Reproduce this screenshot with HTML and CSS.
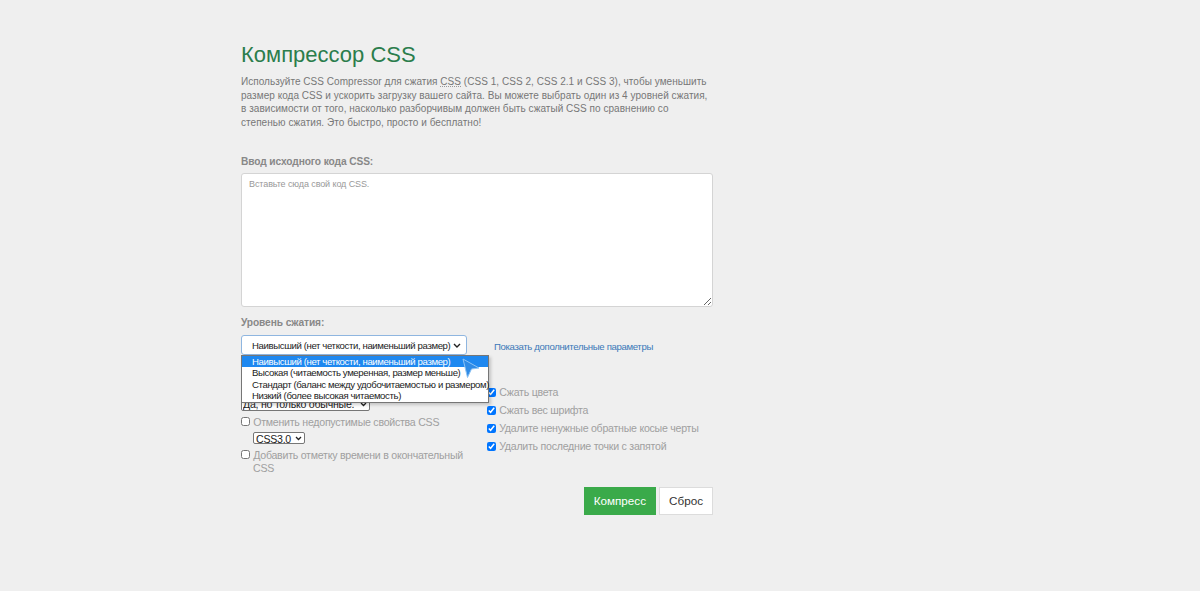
FILE: index.html
```html
<!DOCTYPE html>
<html lang="ru">
<head>
    <meta charset="UTF-8">
    <meta name="viewport" content="width=device-width, initial-scale=1.0">
    <title>Компрессор CSS</title>
    <link rel="stylesheet" href="styles.css">
</head>
<body>
    <main class="tool">
        <h1>Компрессор CSS</h1>
        <p class="intro">Используйте CSS Compressor для сжатия <abbr title="Cascading Style Sheets">CSS</abbr> (CSS 1, CSS 2, CSS 2.1 и CSS 3), чтобы уменьшить размер кода CSS и ускорить загрузку вашего сайта. Вы можете выбрать один из 4 уровней сжатия, в зависимости от того, насколько разборчивым должен быть сжатый CSS по сравнению со степенью сжатия. Это быстро, просто и бесплатно!</p>

        <label class="field-label" for="source">Ввод исходного кода CSS:</label>
        <textarea id="source" class="source" placeholder="Вставьте сюда свой код CSS."></textarea>

        <label class="field-label level-label" for="level">Уровень сжатия:</label>
        <div class="level-row">
            <div class="select-wrap">
                <select id="level" class="level-select">
                    <option>Наивысший (нет четкости, наименьший размер)</option>
                    <option>Высокая (читаемость умеренная, размер меньше)</option>
                    <option>Стандарт (баланс между удобочитаемостью и размером)</option>
                    <option>Низкий (более высокая читаемость)</option>
                </select>
                <svg class="chevron level-chevron" width="8" height="5" viewBox="0 0 8 5">
                    <path d="M1 1 L4 4 L7 1" fill="none" stroke="#222" stroke-width="1.4"/>
                </svg>
                <!-- раскрытый список -->
                <ul class="dropdown">
                    <li class="active">Наивысший (нет четкости, наименьший размер)</li>
                    <li>Высокая (читаемость умеренная, размер меньше)</li>
                    <li>Стандарт (баланс между удобочитаемостью и размером)</li>
                    <li>Низкий (более высокая читаемость)</li>
                </ul>
                <svg class="pointer" width="20" height="22" viewBox="0 0 20 22">
                    <path d="M1 1 L17 10 L9.5 11 L5.5 19.5 Z" fill="#2f8be6" stroke="#8cc3f5" stroke-width="1" stroke-linejoin="round"/>
                </svg>
            </div>
            <a href="#" class="more-link">Показать дополнительные параметры</a>
        </div>

        <div class="options">
            <div class="options-col left-col">
                <div class="opt-label">Удалить комментарии:</div>
                <span class="select-box comments-box">
                    <select class="small-select">
                        <option>Да, но только обычные.</option>
                        <option>Да, все</option>
                        <option>Нет</option>
                    </select>
                    <svg class="chevron" width="7" height="5" viewBox="0 0 7 5">
                        <path d="M1 1 L3.5 3.5 L6 1" fill="none" stroke="#222" stroke-width="1.3"/>
                    </svg>
                </span>
                <label class="check"><input type="checkbox"> Отменить недопустимые свойства CSS</label>
                <span class="select-box css-box">
                    <select class="small-select">
                        <option>CSS3.0</option>
                        <option>CSS2.1</option>
                    </select>
                    <svg class="chevron" width="7" height="5" viewBox="0 0 7 5">
                        <path d="M1 1 L3.5 3.5 L6 1" fill="none" stroke="#222" stroke-width="1.3"/>
                    </svg>
                </span>
                <label class="check check-last"><input type="checkbox"> Добавить отметку времени в окончательный CSS</label>
            </div>
            <div class="options-col right-col">
                <label class="check"><input type="checkbox" checked> Сжать цвета</label>
                <label class="check"><input type="checkbox" checked> Сжать вес шрифта</label>
                <label class="check"><input type="checkbox" checked> Удалите ненужные обратные косые черты</label>
                <label class="check"><input type="checkbox" checked> Удалить последние точки с запятой</label>
            </div>
        </div>

        <div class="actions">
            <button class="btn btn-primary">Компресс</button>
            <button class="btn btn-reset">Сброс</button>
        </div>
    </main>
</body>
</html>
```

FILE: styles.css
```css
body {
    font-family: "Liberation Sans", Arial, sans-serif;
    background-color: #efefef;
    margin: 0;
    padding: 0;
}

.tool {
    width: 472px;
    margin-left: 241px;
    padding-top: 41px;
}

h1 {
    font-size: 22px;
    font-weight: normal;
    line-height: 28px;
    color: #2b7d4c;
    margin: 0;
}

.intro {
    font-size: 10px;
    letter-spacing: 0.04px;
    line-height: 13.5px;
    color: #777;
    margin: 6px 0 0;
}

.intro abbr {
    text-decoration: underline dotted #999;
}

.field-label {
    display: block;
    font-size: 10.2px;
    letter-spacing: -0.1px;
    font-weight: bold;
    line-height: 14px;
    color: #888;
    margin-top: 26px;
}

.level-label {
    margin-top: 9px;
}

.source {
    display: block;
    box-sizing: border-box;
    width: 472px;
    height: 134px;
    margin-top: 4px;
    padding: 5px 7px;
    background: #fff;
    border: 1px solid #d4d4d4;
    border-radius: 3px;
    font-family: "Liberation Sans", Arial, sans-serif;
    font-size: 9px;
    letter-spacing: -0.1px;
    resize: vertical;
}

.source::placeholder {
    color: #999;
}

.level-row {
    display: flex;
    align-items: center;
    margin-top: 5px;
}

.select-wrap {
    position: relative;
}

.level-select {
    display: block;
    width: 226px;
    height: 20px;
    padding: 0 0 0 10px;
    appearance: none;
    background: #fff;
    color: #222;
    border: 1px solid #8fb6e0;
    border-radius: 3px;
    font-family: "Liberation Sans", Arial, sans-serif;
    font-size: 9.6px;
    letter-spacing: -0.38px;
}

.chevron {
    position: absolute;
    pointer-events: none;
}

.level-chevron {
    right: 6px;
    top: 8px;
}

.dropdown {
    position: absolute;
    top: 20px;
    left: 0;
    width: 248px;
    box-sizing: border-box;
    margin: 0;
    padding: 0 0 1px;
    list-style: none;
    background: #fff;
    border: 1px solid #767676;
    box-shadow: 2px 2px 3px rgba(0, 0, 0, 0.18);
    z-index: 10;
}

.dropdown li {
    font-size: 9.6px;
    letter-spacing: -0.38px;
    line-height: 11.25px;
    padding-left: 10px;
    color: #222;
    white-space: nowrap;
}

.dropdown li.active {
    background-color: #1e88f0;
    color: #fff;
}

.pointer {
    position: absolute;
    left: 221px;
    top: 23px;
    z-index: 11;
}

.more-link {
    margin-left: 27px;
    margin-top: 2px;
    font-size: 9.6px;
    letter-spacing: -0.35px;
    color: #3a78b8;
    text-decoration: none;
}

.options {
    display: flex;
    margin-top: 24px;
}

.options-col {
    display: flex;
    flex-direction: column;
    align-items: flex-start;
}

.left-col {
    width: 236px;
    flex-shrink: 0;
}

.right-col {
    flex: 1;
    margin-left: 10px;
    padding-top: 7px;
}

.opt-label {
    font-size: 10.6px;
    line-height: 13.5px;
    color: #999;
}

.check {
    display: block;
    font-size: 10.6px;
    letter-spacing: -0.25px;
    line-height: 13.5px;
    color: #a0a0a0;
    padding-left: 12px;
    text-indent: -12px;
    margin-bottom: 4.5px;
}

.check input {
    width: 9px;
    height: 9px;
    margin: 0 0.5px 0 0;
    vertical-align: -0.5px;
}

.check-last {
    margin-top: 5px;
    margin-bottom: 0;
}

.select-box {
    position: relative;
    display: inline-block;
}

.select-box .chevron {
    right: 3px;
    top: 5px;
}

.small-select {
    display: block;
    height: 14px;
    padding: 0 14px 0 1px;
    appearance: none;
    background: #fff;
    color: #222;
    border: 1px solid #767676;
    border-radius: 2px;
    font-family: "Liberation Sans", Arial, sans-serif;
    font-size: 10.6px;
    letter-spacing: -0.25px;
    line-height: 12px;
}

.comments-box {
    margin-top: 4px;
    margin-bottom: 5px;
}

.css-box {
    margin-left: 12px;
    margin-top: -2px;
}

.css-box .small-select {
    height: 12px;
    padding-left: 2px;
    padding-right: 12px;
}

.css-box .chevron {
    top: 4px;
}

.actions {
    display: flex;
    justify-content: flex-end;
    gap: 3px;
    margin-top: 11px;
}

.btn {
    height: 28px;
    padding: 0 10px;
    font-family: "Liberation Sans", Arial, sans-serif;
    font-size: 11.7px;
    border-radius: 0;
    cursor: pointer;
}

.btn-primary {
    background-color: #3aaa4a;
    color: #fff;
    border: none;
}

.btn-reset {
    padding: 0 9px;
    background-color: #fff;
    color: #333;
    border: 1px solid #dcdcdc;
}
```
